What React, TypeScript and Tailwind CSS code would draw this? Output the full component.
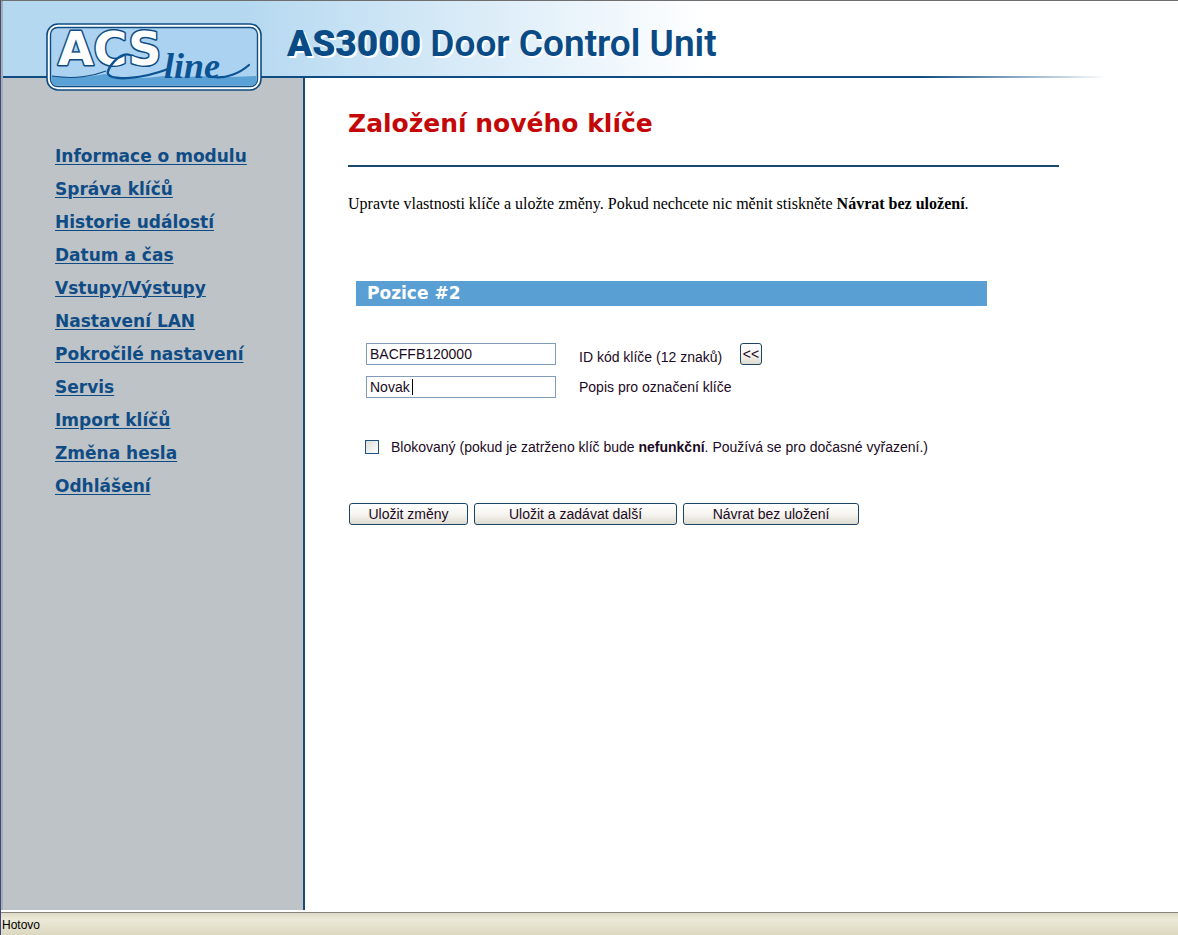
import { useState } from 'react';

const MENU = [
  'Informace o modulu',
  'Správa klíčů',
  'Historie událostí',
  'Datum a čas',
  'Vstupy/Výstupy',
  'Nastavení LAN',
  'Pokročilé nastavení',
  'Servis',
  'Import klíčů',
  'Změna hesla',
  'Odhlášení',
];

const buttonClass =
  'h-[22px] rounded-[3px] border border-[#1c4467] bg-linear-to-b from-white via-[#f6f5f1] to-[#dedbd0] text-center text-[14px] leading-4 text-[#1c0a24]';

function Logo() {
  return (
    <svg width="216" height="68" viewBox="0 0 216 68" className="overflow-visible" role="img" aria-label="ACS line">
      <rect x="1" y="1" width="214" height="66" rx="11" fill="#fff" stroke="#0f4c81" strokeWidth="1.6" />
      <rect x="4.5" y="4.5" width="207" height="59" rx="7" fill="#abd2f0" stroke="#0f4c81" strokeWidth="1.4" />
      <path d="M5.5 53 C30 55 46 54 58 51 C84 57 100 55 118 53 C138 56 160 51 184 54 L210.500 53 V57 Q210.500 62.500 205 62.500 H11 Q5.500 62.500 5.500 57 Z" fill="#5aa1d6" />
      <text x="12" y="42" fontFamily="DejaVu Sans, sans-serif" fontWeight="700" fontSize="46" fill="#fff" stroke="#0f4c81" strokeWidth="3" paintOrder="stroke" strokeLinejoin="round">
        ACS
      </text>
      <path d="M6 53 C30 57 50 52 60 48" fill="none" stroke="#0f4c81" strokeWidth="1.2" />
      <path d="M84 32 C74 28 60 46 62 51 C66 58 96 56 122 46" fill="none" stroke="#0b5394" strokeWidth="2.400" strokeLinecap="round" />
      <text x="118" y="55" fontFamily="Liberation Serif, serif" fontStyle="italic" fontWeight="700" fontSize="36" fill="#0b5394">
        line
      </text>
      <path d="M167 54 C180 56 194 50 203 42" fill="none" stroke="#0b5394" strokeWidth="2.2" strokeLinecap="round" />
    </svg>
  );
}

function Header() {
  return (
    <header className="bg-linear-to-r from-[#b4d8f0] from-20% to-white to-60%">
      <div className="flex h-[75px] items-start gap-[25px] pl-[43px]">
        {/* The plate hangs over the top of the sidebar */}
        <div className="relative z-10 mt-[22px] shrink-0">
          <Logo />
        </div>
        <div className="mt-[21px] whitespace-nowrap font-['Roboto',sans-serif] text-[37px] leading-[44px] font-semibold text-[#0a4a85] [text-shadow:2px_2px_0_#ffffff]">
          <span className="font-black">AS3000</span> Door Control Unit
        </div>
      </div>
      <div className="h-[2px] bg-linear-to-r from-[#0f4c81] from-78% to-transparent to-94%" />
    </header>
  );
}

function Sidebar() {
  return (
    <nav className="w-[302px] shrink-0 border-r-2 border-[#164a78] bg-[#bec3c7] pt-[61px] pl-[52px]">
      <ul>
        {MENU.map((item) => (
          <li key={item} className="flex h-[33px] items-center">
            <a
              href="#"
              className="whitespace-nowrap font-['DejaVu_Sans',sans-serif] text-[17px] leading-6 font-bold text-[#0f4c86] underline decoration-1 underline-offset-2"
            >
              {item}
            </a>
          </li>
        ))}
      </ul>
    </nav>
  );
}

function KeyForm() {
  const [keyId, setKeyId] = useState('BACFFB120000');
  const [label, setLabel] = useState('Novak');
  const [blocked, setBlocked] = useState(false);

  return (
    <form className="text-[14px] leading-4 text-[#1c0a24]" onSubmit={(e) => e.preventDefault()}>
      <h2 className="ml-2 mt-[67px] h-[25px] max-w-[631px] bg-[#5a9fd4] pl-[11px] font-['DejaVu_Sans',sans-serif] text-[17px] leading-[25px] font-bold text-white">
        Pozice #2
      </h2>

      {/* Key properties */}
      <div className="mt-[37px] ml-[18px] flex flex-col gap-[11px]">
        <div className="flex items-end">
          <input
            id="key-id"
            value={keyId}
            maxLength={12}
            onChange={(e) => setKeyId(e.target.value)}
            className="h-[22px] w-[190px] border border-[#7f9db9] bg-white px-[3px]"
          />
          <label htmlFor="key-id" className="ml-[23px] w-[161px]">
            ID kód klíče (12 znaků)
          </label>
          <button type="button" className={`${buttonClass} w-[22px]`}>
            &lt;&lt;
          </button>
        </div>
        <div className="flex items-center">
          <div className="relative">
            <input
              id="key-label"
              value={label}
              onChange={(e) => setLabel(e.target.value)}
              className="block h-[22px] w-[190px] border border-[#7f9db9] bg-white px-[3px]"
            />
            <span className="absolute top-[3px] left-[46px] h-4 w-px bg-black" />
          </div>
          <label htmlFor="key-label" className="ml-[23px]">
            Popis pro označení klíče
          </label>
        </div>
      </div>

      <div className="mt-[41px] ml-[17px] flex items-center">
        <input
          id="blocked"
          type="checkbox"
          checked={blocked}
          onChange={(e) => setBlocked(e.target.checked)}
          className="size-[14px] appearance-none border border-[#1c5180] bg-linear-to-br from-[#dcdcd7] to-white checked:bg-[#1c5180]"
        />
        <label htmlFor="blocked" className="ml-3">
          Blokovaný (pokud je zatrženo klíč bude <b>nefunkční</b>. Používá se pro dočasné vyřazení.)
        </label>
      </div>

      {/* Actions */}
      <div className="mt-12 ml-px flex flex-wrap gap-[6px]">
        <button type="submit" className={`${buttonClass} w-[119px]`}>
          Uložit změny
        </button>
        <button type="button" className={`${buttonClass} w-[203px]`}>
          Uložit a zadávat další
        </button>
        <button type="button" className={`${buttonClass} w-[176px]`}>
          Návrat bez uložení
        </button>
      </div>
    </form>
  );
}

export default function App() {
  return (
    <div className="flex min-h-screen flex-col border-t border-l border-t-[#6f6f6f] border-l-[#3c4a80] bg-white font-['Liberation_Sans',Arial,sans-serif]">
      <div className="flex flex-1 flex-col border-l-2 border-[#a9acb2]">
        <Header />
        <div className="flex flex-1">
          <Sidebar />
          <main className="min-w-0 flex-1 pr-[119px] pl-[43px]">
            <h1 className="mt-[30px] font-['DejaVu_Sans',sans-serif] text-[25px] leading-8 font-bold text-[#c40808]">
              Založení nového klíče
            </h1>
            <hr className="mt-[25px] border-t-2 border-[#174a6e]" />
            <p className="mt-[26px] font-['Liberation_Serif',serif] text-[16px] leading-[21px] text-black">
              Upravte vlastnosti klíče a uložte změny. Pokud nechcete nic měnit stiskněte <b>Návrat bez uložení</b>.
            </p>
            <KeyForm />
          </main>
        </div>
      </div>

      {/* Status bar */}
      <footer className="mt-[2px] h-[23px] border-t border-[#85837a] bg-linear-to-b from-[#dedac6] via-[#ece9d8] via-30% to-[#dcd8c0] pl-px text-[12px] leading-6 text-black">
        Hotovo
      </footer>
    </div>
  );
}
